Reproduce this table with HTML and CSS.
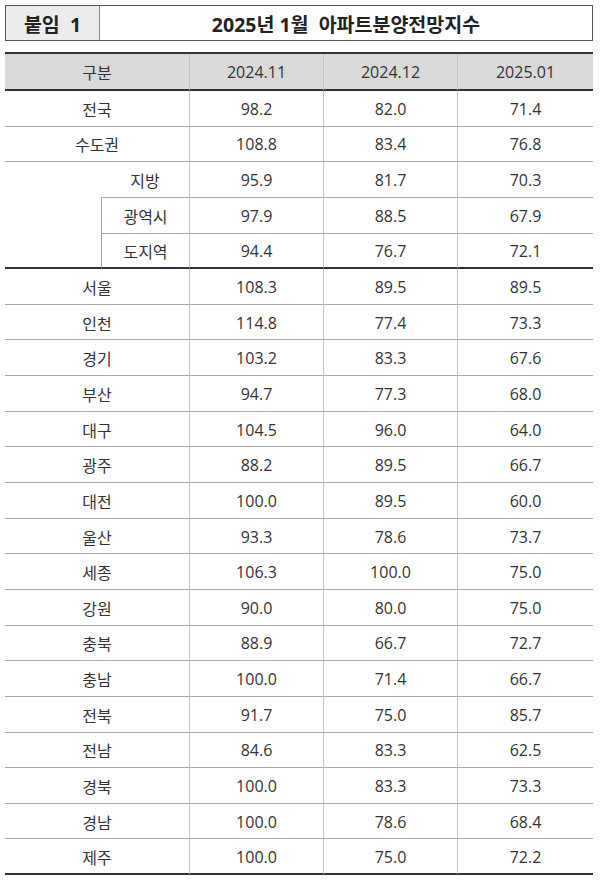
FILE: index.html
```html
<!DOCTYPE html>
<html lang="ko">
<head>
<meta charset="utf-8">
<title>2025년 1월 아파트분양전망지수</title>
<link rel="stylesheet" href="styles.css">
</head>
<body>
<div class="page">
  <div class="title-box">
    <div class="title-label">붙임&nbsp; 1</div>
    <div class="title-text">2025년 1월&nbsp; 아파트분양전망지수</div>
  </div>
  <div class="grid">
    <div class="c head lbl2">구분</div>
    <div class="c head v">2024.11</div>
    <div class="c head v">2024.12</div>
    <div class="c head v">2025.01</div>

    <div class="c lbl2">전국</div><div class="c v">98.2</div><div class="c v">82.0</div><div class="c v">71.4</div>
    <div class="c lbl2">수도권</div><div class="c v">108.8</div><div class="c v">83.4</div><div class="c v">76.8</div>

    <div class="c blank thick"></div>
    <div class="c sub-top">지방</div><div class="c v">95.9</div><div class="c v">81.7</div><div class="c v">70.3</div>
    <div class="c sub">광역시</div><div class="c v">97.9</div><div class="c v">88.5</div><div class="c v">67.9</div>
    <div class="c sub thick">도지역</div><div class="c v thick">94.4</div><div class="c v thick">76.7</div><div class="c v thick">72.1</div>

    <div class="c lbl2">서울</div><div class="c v">108.3</div><div class="c v">89.5</div><div class="c v">89.5</div>
    <div class="c lbl2">인천</div><div class="c v">114.8</div><div class="c v">77.4</div><div class="c v">73.3</div>
    <div class="c lbl2">경기</div><div class="c v">103.2</div><div class="c v">83.3</div><div class="c v">67.6</div>
    <div class="c lbl2">부산</div><div class="c v">94.7</div><div class="c v">77.3</div><div class="c v">68.0</div>
    <div class="c lbl2">대구</div><div class="c v">104.5</div><div class="c v">96.0</div><div class="c v">64.0</div>
    <div class="c lbl2">광주</div><div class="c v">88.2</div><div class="c v">89.5</div><div class="c v">66.7</div>
    <div class="c lbl2">대전</div><div class="c v">100.0</div><div class="c v">89.5</div><div class="c v">60.0</div>
    <div class="c lbl2">울산</div><div class="c v">93.3</div><div class="c v">78.6</div><div class="c v">73.7</div>
    <div class="c lbl2">세종</div><div class="c v">106.3</div><div class="c v">100.0</div><div class="c v">75.0</div>
    <div class="c lbl2">강원</div><div class="c v">90.0</div><div class="c v">80.0</div><div class="c v">75.0</div>
    <div class="c lbl2">충북</div><div class="c v">88.9</div><div class="c v">66.7</div><div class="c v">72.7</div>
    <div class="c lbl2">충남</div><div class="c v">100.0</div><div class="c v">71.4</div><div class="c v">66.7</div>
    <div class="c lbl2">전북</div><div class="c v">91.7</div><div class="c v">75.0</div><div class="c v">85.7</div>
    <div class="c lbl2">전남</div><div class="c v">84.6</div><div class="c v">83.3</div><div class="c v">62.5</div>
    <div class="c lbl2">경북</div><div class="c v">100.0</div><div class="c v">83.3</div><div class="c v">73.3</div>
    <div class="c lbl2">경남</div><div class="c v">100.0</div><div class="c v">78.6</div><div class="c v">68.4</div>
    <div class="c lbl2 thick">제주</div><div class="c v thick">100.0</div><div class="c v thick">75.0</div><div class="c v thick">72.2</div>
  </div>
</div>
</body>
</html>
```

FILE: styles.css
```css
* { box-sizing: border-box; }
html, body { margin: 0; padding: 0; background: #ffffff; }
body {
  font-family: "Open Sans", "Noto Sans CJK KR", sans-serif;
  color: #333333;
}
.page {
  width: 600px;
  padding: 5px 7px 0 5px;
}
.title-box {
  display: flex;
  height: 36px;
  border: 1px solid #555555;
}
.title-label {
  width: 94px;
  background: #ececec;
  border-right: 1px solid #8a8a8a;
  display: flex;
  align-items: center;
  justify-content: center;
  font-weight: 700;
  font-size: 19.5px;
  color: #222222;
}
.title-text {
  flex: 1;
  display: flex;
  align-items: center;
  justify-content: center;
  font-weight: 700;
  font-size: 19.5px;
  color: #222222;
}
.grid {
  margin-top: 11px;
  display: grid;
  grid-template-columns: 96px 88px 134px 134px 136px;
  grid-template-rows: 37px repeat(22, 35.65px);
  border-top: 2px solid #333333;
}
.c {
  display: flex;
  align-items: center;
  justify-content: center;
  font-size: 16px;
  border-bottom: 1px solid #a8a8a8;
  padding-top: 1px;
}
.head {
  background: #d9d9d9;
  border-bottom: 2px solid #333333;
}
.lbl2 { grid-column: span 2; }
.v { border-left: 1px solid #c4c4c4; }
.blank {
  grid-row: span 3;
  grid-column: 1;
}
.sub-top { grid-column: 2; }
.sub {
  grid-column: 2;
  border-left: 1px solid #a0a0a0;
}
.c.thick { border-bottom: 2px solid #333333; }
```
